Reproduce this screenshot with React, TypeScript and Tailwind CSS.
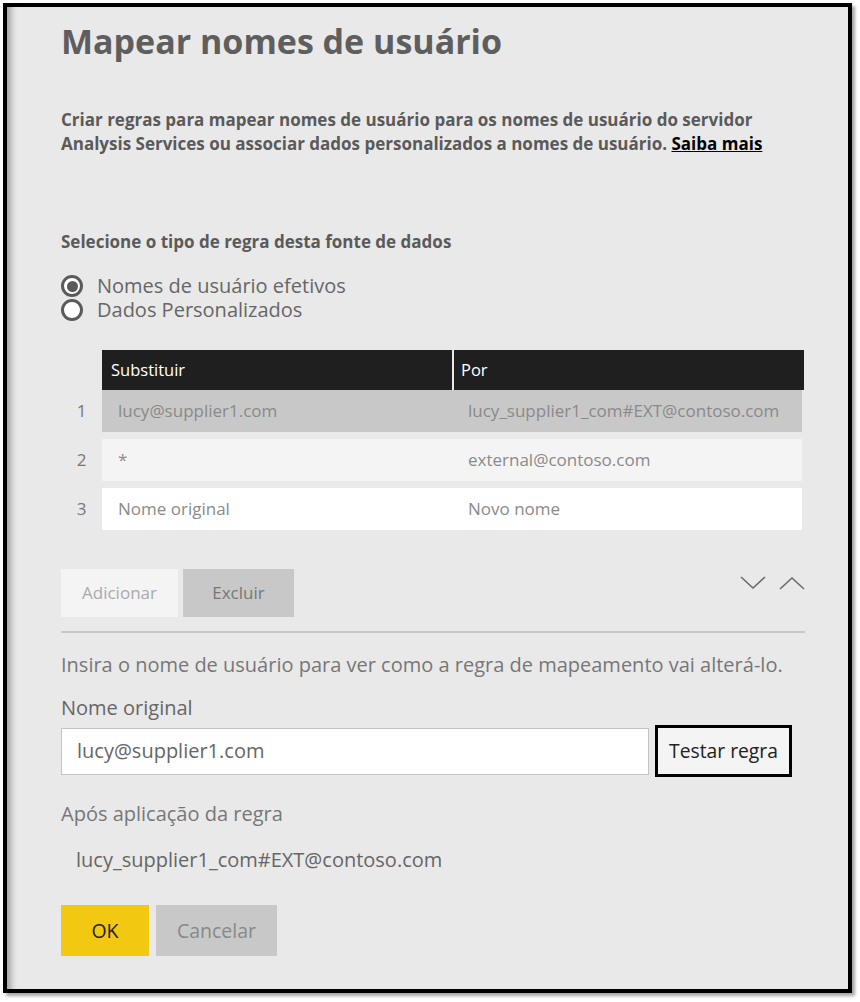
import { FC } from "react";

const rows = [
  { n: 1, from: "lucy@supplier1.com", to: "lucy_supplier1_com#EXT@contoso.com", bg: "bg-[#c8c8c8]" },
  { n: 2, from: "*", to: "external@contoso.com", bg: "bg-[#f4f4f4]" },
  { n: 3, from: "Nome original", to: "Novo nome", bg: "bg-white" },
];

const Chevron: FC<{ up?: boolean }> = ({ up }) => (
  <svg width="26" height="16" viewBox="0 0 26 16" fill="none">
    <path
      d={up ? "M1 14 L13 3 L25 14" : "M1 2 L13 13 L25 2"}
      stroke="#6b6b6b"
      strokeWidth="1.6"
    />
  </svg>
);

const App: FC = () => {
  return (
    <div className="w-[860px] h-[1002px] bg-white font-['Open_Sans','Noto_Sans',sans-serif]">
      <div className="absolute left-[3px] top-[3px] w-[849px] h-[990px] border-4 border-black bg-[#e9e9e9] shadow-[3px_3px_3px_rgba(0,0,0,0.35)]">
        <div className="h-full pl-[54px] pr-[43px] pt-[14px] shadow-[inset_10px_0_6px_-6px_rgba(0,0,0,0.3)]">
          <h1 className="text-[34px] leading-[40px] font-bold text-[#5e5e5e]">
            Mapear nomes de usuário
          </h1>
          <p className="mt-[47px] text-[17px] leading-[24px] font-bold text-[#5a5a5a]">
            Criar regras para mapear nomes de usuário para os nomes de usuário do servidor
            <br />
            Analysis Services ou associar dados personalizados a nomes de usuário.{" "}
            <span className="text-black underline">Saiba mais</span>
          </p>
          <p className="mt-[74px] text-[17px] leading-[24px] font-bold text-[#5a5a5a]">
            Selecione o tipo de regra desta fonte de dados
          </p>
          <div className="mt-[20px] flex flex-col text-[20px] leading-[24px] text-[#666]">
            <label className="flex items-center gap-[14px]">
              <span className="w-[22px] h-[22px] rounded-full border-[3px] border-[#5a5a5a] bg-white flex items-center justify-center">
                <span className="w-[11px] h-[11px] rounded-full bg-[#5a5a5a]" />
              </span>
              Nomes de usuário efetivos
            </label>
            <label className="flex items-center gap-[14px]">
              <span className="w-[22px] h-[22px] rounded-full border-[3px] border-[#5a5a5a] bg-white" />
              Dados Personalizados
            </label>
          </div>

          <div className="mt-[28px] flex flex-col gap-[7px]">
            <div className="flex">
              <div className="w-[41px]" />
              <div className="flex w-[702px] h-[40px] bg-[#1f1f1f] text-white text-[16.5px] items-center">
                <div className="w-[352px] h-full flex items-center pl-[9px] border-r-2 border-[#e9e9e9]">
                  Substituir
                </div>
                <div className="flex-1 pl-[7px]">Por</div>
              </div>
            </div>
            {rows.map((r, i) => (
              <div key={r.n} className={`flex ${i === 0 ? "-mt-[7px]" : ""}`}>
                <div className="w-[41px] flex items-center justify-center text-[17px] text-[#777]">
                  {r.n}
                </div>
                <div className={`flex w-[700px] h-[42px] items-center text-[17px] text-[#8a8a8a] ${r.bg}`}>
                  <div className="w-[350px] pl-[16px]">{r.from}</div>
                  <div className="flex-1 pl-[16px]">{r.to}</div>
                </div>
              </div>
            ))}
          </div>

          <div className="mt-[39px] flex items-start justify-between">
            <div className="flex gap-[5px]">
              <button className="w-[117px] h-[48px] bg-[#f4f4f4] text-[17px] text-[#aaa]">
                Adicionar
              </button>
              <button className="w-[111px] h-[48px] bg-[#c8c8c8] text-[17px] text-[#777]">
                Excluir
              </button>
            </div>
            <div className="flex gap-[13px] pt-[6px]">
              <Chevron />
              <Chevron up />
            </div>
          </div>

          <div className="mt-[14px] h-[2px] bg-[#c8c8c8]" />

          <p className="mt-[20px] text-[20px] leading-[24px] text-[#777]">
            Insira o nome de usuário para ver como a regra de mapeamento vai alterá-lo.
          </p>
          <p className="mt-[19px] text-[20px] leading-[24px] text-[#666]">Nome original</p>
          <div className="mt-[5px] flex items-center gap-[6px]">
            <div className="w-[588px] h-[47px] bg-white border border-[#c4c4c4] flex items-center pl-[15px] text-[20px] text-[#666]">
              lucy@supplier1.com
            </div>
            <button className="w-[137px] h-[52px] bg-[#f4f4f4] border-[3px] border-black text-[19.3px] text-[#222]">
              Testar regra
            </button>
          </div>
          <p className="mt-[25px] text-[20px] leading-[24px] text-[#777]">Após aplicação da regra</p>
          <p className="mt-[22px] pl-[15px] text-[20px] leading-[24px] text-[#666]">
            lucy_supplier1_com#EXT@contoso.com
          </p>
          <div className="mt-[33px] flex gap-[7px]">
            <button className="w-[88px] h-[51px] bg-[#f2c811] text-[19.5px] text-[#222]">OK</button>
            <button className="w-[121px] h-[51px] bg-[#c8c8c8] text-[19.5px] text-[#888]">Cancelar</button>
          </div>
        </div>
      </div>
    </div>
  );
};

export default App;
